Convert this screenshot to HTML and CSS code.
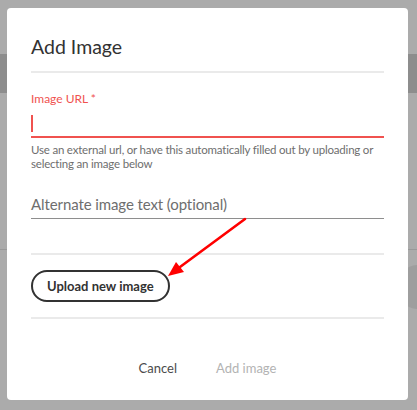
FILE: index.html
```html
<!DOCTYPE html>
<html lang="en">
<head>
    <meta charset="UTF-8">
    <title>Add Image</title>
    <link rel="stylesheet" href="styles.css">
</head>
<body>
    <!-- page behind the modal -->
    <div class="page">
        <div class="page-bar"></div>
        <div class="page-rule"></div>
        <div class="page-avatar"></div>
    </div>

    <div class="dialog">
        <h2 class="dialog-title">Add Image</h2>
        <div class="dialog-body">
            <div class="field field-invalid">
                <label class="field-label">Image URL *</label>
                <div class="field-input"><span class="caret"></span></div>
            </div>
            <p class="field-help">Use an external url, or have this automatically filled out by uploading or selecting an image below</p>
            <div class="field field-alt">
                <div class="field-placeholder">Alternate image text (optional)</div>
            </div>
            <div class="upload-row">
                <button class="btn-outline">Upload new image</button>
            </div>
        </div>
        <div class="dialog-footer">
            <button class="btn-quiet">Cancel</button>
            <button class="btn-quiet btn-disabled">Add image</button>
        </div>
    </div>

    <!-- red annotation arrow -->
    <svg class="arrow" width="417" height="410" viewBox="0 0 417 410">
        <line x1="245" y1="219" x2="180" y2="267" stroke="#f00" stroke-width="2.6" stroke-linecap="round"/>
        <polygon points="168,276 176,262 184,272" fill="#f00"/>
    </svg>
</body>
</html>
```

FILE: styles.css
```css
body {
    margin: 0;
    width: 417px;
    height: 410px;
    overflow: hidden;
    background: #ababab;
    font-family: 'Lato', 'Open Sans', Arial, sans-serif;
    position: relative;
}
.page {
    width: 417px;
    height: 410px;
    padding-top: 54px;
    box-sizing: border-box;
    overflow: hidden;
}
.page-bar {
    height: 39px;
    background: #8d8d8d;
}
.page-rule {
    margin-top: 156px;
    height: 1px;
    background: #999;
}
.page-avatar {
    margin: 15px 0 0 396px;
    width: 44px;
    height: 44px;
    border-radius: 50%;
    background: #9e9e9e;
}
.dialog {
    position: absolute;
    left: 7px;
    top: 8px;
    width: 401px;
    height: 392px;
    box-sizing: border-box;
    background: #fff;
    border-radius: 4px;
    padding: 0 24px;
    display: flex;
    flex-direction: column;
}
.dialog-title {
    margin: 0;
    padding: 28px 0 13px 0;
    font-size: 19.5px;
    font-weight: 400;
    color: #323232;
    border-bottom: 2px solid #eaeaea;
    line-height: 22px;
}
.field-label {
    display: block;
    margin-top: 19px;
    font-size: 12px;
    line-height: 14px;
    color: #f0524f;
}
.field-input {
    height: 32px;
    padding-top: 9px;
    box-sizing: border-box;
    border-bottom: 2px solid #f0524f;
}
.caret {
    display: block;
    width: 2px;
    height: 17px;
    background: #f0524f;
}
.field-help {
    margin: 5px 0 0 0;
    font-size: 11.5px;
    line-height: 14px;
    letter-spacing: -0.2px;
    color: #6e6e6e;
}
.field-alt {
    margin-top: 23px;
    border-bottom: 1px solid #8e8e8e;
    padding-bottom: 4px;
}
.field-placeholder {
    font-size: 15px;
    line-height: 20px;
    letter-spacing: -0.1px;
    color: #6e6e6e;
}
.upload-row {
    margin-top: 34px;
    border-top: 2px solid #eaeaea;
    border-bottom: 2px solid #eaeaea;
    padding: 15px 0 15px 0;
}
.btn-outline {
    height: 32px;
    padding: 0 14px;
    border: 2px solid #323232;
    border-radius: 16px;
    background: #fff;
    font-family: inherit;
    font-size: 13px;
    font-weight: 700;
    color: #323232;
}
.dialog-footer {
    display: flex;
    justify-content: center;
    gap: 39px;
    margin-top: 41px;
}
.btn-quiet {
    background: none;
    border: none;
    padding: 0;
    font-family: inherit;
    font-size: 13px;
    color: #4b4b4b;
}
.btn-disabled {
    color: #b3b3b3;
}
.arrow {
    position: absolute;
    left: 0;
    top: 0;
}
```
